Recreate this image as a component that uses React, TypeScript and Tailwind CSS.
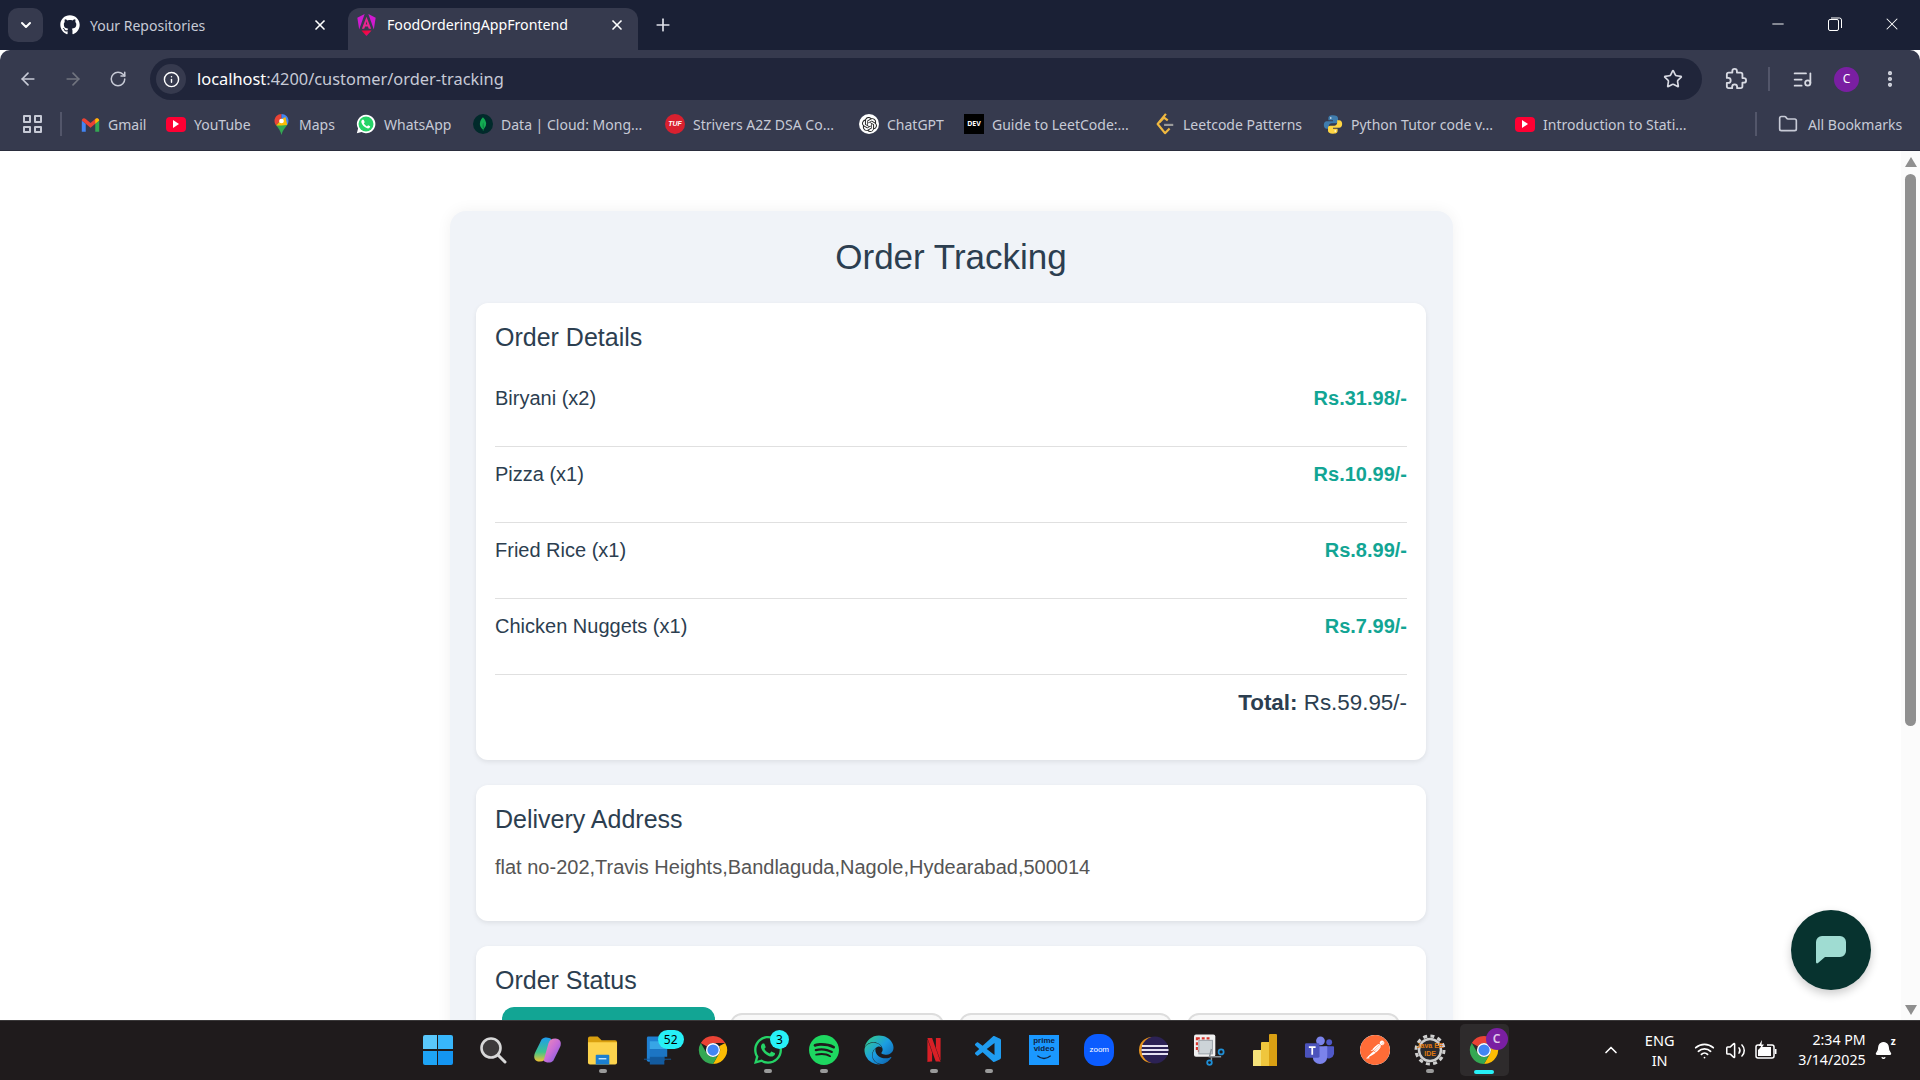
import React from 'react';
import {
  ArrowLeft, ArrowRight, RotateCw, Info, Star, ListMusic, EllipsisVertical,
  Folder, X, Plus, ChevronDown, ChevronUp, Minus, Wifi, Volume2, Bell,
} from 'lucide-react';
import { FaGithub, FaEdge, FaWhatsapp } from 'react-icons/fa';
import { SiSpotify, SiNetflix, SiPostman, SiMongodb, SiOpenai } from 'react-icons/si';
import { VscVscode } from 'react-icons/vsc';

const uiFont = { fontFamily: '"Noto Sans", sans-serif' };

function Gmail() {
  return (
    <svg viewBox="0 0 24 18" className="h-[15px] w-[19px]">
      <path d="M1 18V4l5 4v10z" fill="#4285f4" />
      <path d="M23 18V4l-5 4v10z" fill="#34a853" />
      <path d="M1 4c0-3 3-4 5-2l6 5 6-5c2-2 5-1 5 2l-5 4-6 5-6-5z" fill="#ea4335" />
      <path d="M18 2c2-2 5-1 5 2l-5 4z" fill="#fbbc04" />
    </svg>
  );
}

function Youtube() {
  return (
    <div className="flex h-[15px] w-[20px] items-center justify-center rounded-[4px] bg-[#ff0033]">
      <div className="h-0 w-0 border-y-[4px] border-l-[6px] border-y-transparent border-l-white" />
    </div>
  );
}

function Maps() {
  return (
    <svg viewBox="0 0 16 24" className="h-[21px] w-[15px]">
      <path d="M8 0C3.5 0 0 3.5 0 8c0 2 .8 3.600 2 5l6-7z" fill="#ea4335" />
      <path d="M8 0c4.500 0 8 3.500 8 8 0 1.500-.5 3-1.500 4.500L8 6z" fill="#4285f4" />
      <path d="M2 13c2.500 3 5 6 6 11 1-5 4-8 6.500-11.500L8 6z" fill="#34a853" />
      <path d="M2 13l6-7 4.500-2.500L14.500 12.500 8 13z" fill="#fbbc04" />
      <circle cx="8" cy="8" r="2.700" fill="#fff" />
    </svg>
  );
}

function WhatsappFilled() {
  return (
    <svg viewBox="0 0 24 24" className="h-[20px] w-[20px]">
      <path d="M12 1a11 11 0 0 0-9.500 16.500L1 23l5.700-1.500A11 11 0 1 0 12 1z" fill="#fff" />
      <circle cx="12" cy="12" r="9" fill="#25d366" />
      <path d="M8.500 6.500c-.5 0-1 .2-1.300.7-.6.8-1 1.700-.7 3 .6 2.500 3.800 6 7 7 1.300.4 2.300-.2 3-1 .4-.5.5-1.200.4-1.600l-2.400-1.200-1.300 1.500c-1.700-.7-3-2-3.800-3.700l1.100-1.300-1-2.400z" fill="#fff" />
    </svg>
  );
}

function Python() {
  return (
    <svg viewBox="0 0 24 24" className="h-[21px] w-[20px]">
      <path d="M12 1C7 1 6.500 3 6.500 4.500V7H12v1H4.500C2.500 8 1 9.800 1 12.500S2.500 17 4.500 17H7v-3c0-2 1.500-3.500 3.500-3.500h5c1.500 0 2.500-1 2.500-2.500V4.500C18 2.500 16 1 12 1z" fill="#3f7cad" />
      <circle cx="9.300" cy="4.200" r="1" fill="#fff" />
      <path d="M12 23c5 0 5.500-2 5.500-3.500V17H12v-1h7.500c2 0 3.500-1.800 3.500-4.500S21.500 7 19.500 7H17v3c0 2-1.500 3.500-3.500 3.500h-5C7 13.500 6 14.500 6 16v3.500C6 21.500 8 23 12 23z" fill="#ffd543" />
      <circle cx="14.700" cy="19.800" r="1" fill="#fff" />
    </svg>
  );
}

function Chrome({ size = 'h-[30px] w-[30px]' }: { size?: string }) {
  return (
    <svg viewBox="0 0 32 32" className={size}>
      <path d="M16 1a15 15 0 0 1 13 7.500H16a7.500 7.500 0 0 0-6.500 3.750L3 8.500A15 15 0 0 1 16 1z" fill="#ea4335" />
      <path d="M29 8.500A15 15 0 0 1 16 31l6.500-11.250A7.500 7.500 0 0 0 22.500 12z" fill="#fbbc04" />
      <path d="M3 8.500l6.500 11.250A7.500 7.500 0 0 0 22.500 19.750L16 31A15 15 0 0 1 3 8.500z" fill="#34a853" />
      <circle cx="16" cy="16" r="7.500" fill="#fff" />
      <circle cx="16" cy="16" r="6" fill="#4285f4" />
    </svg>
  );
}

function AngularTab() {
  return (
    <svg viewBox="0 0 20 24" className="h-[22px] w-[19px]">
      <defs>
        <linearGradient id="ng" x1="0" y1="0" x2="1" y2="1">
          <stop offset="0" stopColor="#e40035" />
          <stop offset="0.5" stopColor="#f60a48" />
          <stop offset="1" stopColor="#a905c9" />
        </linearGradient>
      </defs>
      <path d="M8 0L0 4l2 13zM12 0l8 4-2 13z" fill="#d01ad0" />
      <path d="M10 3l-5 13h2.500l1-2.500h3L12.500 16H15zM9.200 11.500L10 8l.8 3.500z" fill="#e8268f" />
      <path d="M4.500 18h11L10 24z" fill="url(#ng)" />
    </svg>
  );
}

function ExtensionIcon() {
  return (
    <svg viewBox="0 0 24 24" className="ml-[23px] h-[22px] w-[22px] text-[#d8dae3]" fill="none" stroke="currentColor" strokeWidth="2" strokeLinejoin="round">
      <path d="M20.500 11H19V7c0-1.100-.9-2-2-2h-4V3.500C13 2.120 11.880 1 10.500 1S8 2.120 8 3.500V5H4c-1.100 0-1.990.9-1.990 2v3.800H3.500c1.490 0 2.700 1.210 2.700 2.700s-1.210 2.700-2.700 2.700H2V20c0 1.100.9 2 2 2h3.800v-1.500c0-1.490 1.210-2.700 2.700-2.700s2.700 1.210 2.700 2.700V22H17c1.100 0 2-.9 2-2v-4h1.500c1.380 0 2.500-1.120 2.500-2.500S21.880 11 20.500 11z" />
    </svg>
  );
}

function Tuf() {
  return (
    <div className="flex h-[20px] w-[20px] items-center justify-center rounded-full bg-[#d9202f] text-[7px] font-bold italic text-white" style={{ fontFamily: '"Liberation Sans", sans-serif' }}>
      TUF
    </div>
  );
}

function Leetcode() {
  return (
    <svg viewBox="0 0 20 24" className="h-[22px] w-[20px]" fill="none" strokeWidth="2.400" strokeLinejoin="round">
      <path d="M11 1L2 12l8 10 5-5" stroke="#f0b840" />
      <path d="M4 10l5-5 4 3" stroke="#f0b840" />
      <path d="M9 13h10" stroke="#9a9a9a" />
    </svg>
  );
}

const bookmarks = [
  { label: 'Gmail', icon: <Gmail />, cls: 'w-[86px]' },
  { label: 'YouTube', icon: <Youtube />, cls: 'w-[105px]' },
  { label: 'Maps', icon: <Maps />, cls: 'w-[85px]' },
  { label: 'WhatsApp', icon: <WhatsappFilled />, cls: 'w-[117px]' },
  { label: 'Data | Cloud: Mong...', icon: <div className="flex h-[20px] w-[20px] items-center justify-center rounded-full bg-[#012a2b]"><SiMongodb className="h-[14px] w-[14px] text-[#13aa52]" /></div>, cls: 'w-[192px]' },
  { label: 'Strivers A2Z DSA Co...', icon: <Tuf />, cls: 'w-[194px]' },
  { label: 'ChatGPT', icon: <div className="flex h-[20px] w-[20px] items-center justify-center rounded-full bg-white"><SiOpenai className="h-[15px] w-[15px] text-[#222]" /></div>, cls: 'w-[105px]' },
  { label: 'Guide to LeetCode:...', icon: <div className="flex h-[20px] w-[20px] items-center justify-center bg-black text-[7px] font-bold text-white">DEV</div>, cls: 'w-[191px]' },
  { label: 'Leetcode Patterns', icon: <Leetcode />, cls: 'w-[168px]' },
  { label: 'Python Tutor code v...', icon: <Python />, cls: 'w-[192px]' },
  { label: 'Introduction to Stati...', icon: <Youtube />, cls: 'w-[200px]' },
];

function WindowsLogo() {
  return (
    <div className="grid h-[30px] w-[30px] grid-cols-2 gap-[1.500px]">
      <div className="rounded-tl-[2px] bg-[#5ac8fb]" />
      <div className="rounded-tr-[2px] bg-[#38b7fb]" />
      <div className="rounded-bl-[2px] bg-[#1ea4f5]" />
      <div className="rounded-br-[2px] bg-[#1495f1]" />
    </div>
  );
}

function Search() {
  return (
    <svg viewBox="0 0 28 28" className="h-[28px] w-[28px]">
      <circle cx="12" cy="12" r="9.500" fill="#3d3a3b" stroke="#d8d8d8" strokeWidth="2.600" />
      <path d="M19 19l7 7" stroke="#d8d8d8" strokeWidth="3" strokeLinecap="round" />
    </svg>
  );
}

function Copilot() {
  return (
    <svg viewBox="0 0 30 30" className="h-[30px] w-[29px]">
      <defs>
        <linearGradient id="cpa" x1="0" y1="0" x2="0" y2="1">
          <stop offset="0" stopColor="#1f9cf0" />
          <stop offset="0.6" stopColor="#3ec48d" />
          <stop offset="1" stopColor="#f2c230" />
        </linearGradient>
        <linearGradient id="cpb" x1="0" y1="0" x2="1" y2="1">
          <stop offset="0" stopColor="#f48fb1" />
          <stop offset="0.5" stopColor="#c86dd7" />
          <stop offset="1" stopColor="#6a5ae0" />
        </linearGradient>
      </defs>
      <path d="M9 4c3-3 8-2 10 0l-5 18c-1 3-3 5-7 5-5 0-7-4-5-9z" fill="url(#cpa)" />
      <path d="M21 26c-3 3-8 2-10 0l5-18c1-3 3-5 7-5 5 0 7 4 5 9z" fill="url(#cpb)" />
    </svg>
  );
}

function Explorer() {
  return (
    <svg viewBox="0 0 32 30" className="h-[30px] w-[31px]">
      <path d="M1 3a2 2 0 0 1 2-2h8l4 4h14a2 2 0 0 1 2 2v4H1z" fill="#d9a00f" />
      <path d="M1 7h30v21a2 2 0 0 1-2 2H3a2 2 0 0 1-2-2z" fill="#fcd34d" />
      <path d="M9 21a1 1 0 0 1 1-1h12a1 1 0 0 1 1 1v9H9z" fill="#1b7fd0" />
      <path d="M12 24h8" stroke="#bfe3ff" strokeWidth="1.500" />
    </svg>
  );
}

function Outlook() {
  return (
    <svg viewBox="0 0 32 30" className="h-[30px] w-[31px]">
      <rect x="4" y="1" width="18" height="26" rx="1.500" fill="#1f7fd1" />
      <rect x="7" y="6" width="18" height="8" fill="#37a5e6" />
      <rect x="7" y="14" width="18" height="8" fill="#1c75c4" />
      <rect x="7" y="22" width="15" height="8" fill="#135b9f" />
      <path d="M1 24h28v1H1z" fill="#155a9c" />
    </svg>
  );
}

function PrimeVideo() {
  return (
    <div className="flex h-[30px] w-[30px] flex-col items-center bg-[#1a98ff] pt-[2px] text-[#10233f]" style={{ fontFamily: '"Liberation Sans", sans-serif' }}>
      <span className="text-[8px] leading-[8px] font-bold">prime</span>
      <span className="text-[8px] leading-[8px] font-bold">video</span>
      <svg viewBox="0 0 20 6" className="mt-[2px] h-[5px] w-[20px]" fill="none">
        <path d="M2 1c5 4 11 4 16 0" stroke="#10233f" strokeWidth="1.500" />
      </svg>
    </div>
  );
}

function Zoom() {
  return (
    <div className="flex h-[32px] w-[30px] items-center justify-center rounded-[13px] bg-[#0b5cff] text-[8px] text-white" style={{ fontFamily: '"Liberation Sans", sans-serif' }}>
      zoom
    </div>
  );
}

function Eclipse() {
  return (
    <svg viewBox="0 0 30 30" className="h-[30px] w-[30px]">
      <circle cx="13" cy="15" r="13" fill="#e8951f" />
      <circle cx="16" cy="15" r="13.500" fill="#2c2255" />
      <path d="M3 11h26M2.500 15h27M3 19h26" stroke="#e5e2f2" strokeWidth="2" />
    </svg>
  );
}

function Snipping() {
  return (
    <svg viewBox="0 0 32 32" className="h-[32px] w-[31px]">
      <rect x="0" y="0" width="22" height="23" rx="2" fill="#f0f0f0" />
      <rect x="3" y="4" width="13" height="13" fill="none" stroke="#d8342c" strokeWidth="2.200" strokeDasharray="3 2" />
      <rect x="5" y="6" width="14" height="14" fill="#cdd4d8" stroke="#9aa2a8" strokeWidth="1" />
      <path d="M18 15l-2 8 12 0M18 24v3" stroke="#8a9298" strokeWidth="1.500" fill="none" />
      <circle cx="28" cy="18" r="2.600" fill="none" stroke="#1f8fd6" strokeWidth="1.800" />
      <circle cx="16" cy="29" r="2.400" fill="none" stroke="#1f8fd6" strokeWidth="1.800" />
    </svg>
  );
}

function PowerBi() {
  return (
    <div className="flex h-[32px] w-[24px] items-end">
      <div className="h-[16px] w-[8px] rounded-tl-[1px] bg-[#f5e27a]" />
      <div className="h-[24px] w-[8px] rounded-tl-[1px] bg-[#efc63d]" />
      <div className="h-[32px] w-[8px] rounded-t-[1px] bg-[#d9a013]" />
    </div>
  );
}

function Teams() {
  return (
    <svg viewBox="0 0 32 30" className="h-[30px] w-[31px]">
      <circle cx="17" cy="5.500" r="4.500" fill="#7b83eb" />
      <circle cx="26" cy="7" r="3" fill="#5059c9" />
      <path d="M21 11h9a1 1 0 0 1 1 1v7a6 6 0 0 1-10 3z" fill="#5059c9" />
      <path d="M9 11h15v11a7.500 7.500 0 0 1-15 0z" fill="#7b83eb" />
      <rect x="1" y="8" width="15" height="15" rx="1.500" fill="#4b53bc" />
      <path d="M5 12h7M8.500 12v8" stroke="#fff" strokeWidth="1.800" />
    </svg>
  );
}

function JavaGear() {
  return (
    <div className="relative flex h-[32px] w-[32px] items-center justify-center">
      <svg viewBox="0 0 32 32" className="h-[32px] w-[32px]">
        <circle cx="16" cy="16" r="11" fill="#2a2a2e" stroke="#cfcfcf" strokeWidth="2.500" />
        <circle cx="16" cy="16" r="14" fill="none" stroke="#cfcfcf" strokeWidth="3" strokeDasharray="4 3.330" />
      </svg>
      <div className="absolute inset-0 flex flex-col items-center justify-center text-[7px] leading-[8px] font-bold text-[#e07a10]" style={{ fontFamily: '"Liberation Sans", sans-serif' }}>
        <span>Java EE</span>
        <span>IDE</span>
      </div>
    </div>
  );
}

function BatteryIcon() {
  return (
    <svg viewBox="0 0 22 20" className="ml-[9px] h-[20px] w-[22px]">
      <path d="M5 5H3a2 2 0 0 0-2 2v9a2 2 0 0 0 2 2h14a2 2 0 0 0 2-2V7a2 2 0 0 0-2-2h-5" fill="none" stroke="#fff" strokeWidth="1.500" />
      <path d="M6 7h10v9H3V10z" fill="#fff" />
      <path d="M20 9h1.500v5H20z" fill="#fff" />
      <path d="M7 0L3.500 6H6l-1 4 4-5.500H6.500z" fill="#fff" />
    </svg>
  );
}

function Badge({ text, cls }: { text: string; cls: string }) {
  return (
    <span className={`absolute flex items-center justify-center rounded-full bg-[#27f0f7] text-black ${cls}`} style={uiFont}>
      {text}
    </span>
  );
}

const taskbarApps = [
  { node: <WindowsLogo /> },
  { node: <Search /> },
  { node: <Copilot /> },
  { node: <Explorer />, dot: true },
  { node: <Outlook />, badge: <Badge text="52" cls="right-[2px] top-[9px] h-[19px] w-[26px] text-[12px]" /> },
  { node: <Chrome size="h-[32px] w-[30px]" /> },
  {
    node: <FaWhatsapp className="h-[32px] w-[32px] text-[#25d366]" />,
    dot: true,
    badge: <Badge text="3" cls="right-[7px] top-[9px] h-[19px] w-[19px] text-[12px]" />,
  },
  { node: <SiSpotify className="h-[30px] w-[30px] text-[#1ed760]" />, dot: true },
  { node: <FaEdge className="h-[32px] w-[30px]" fill="url(#edge)" /> },
  { node: <SiNetflix className="h-[32px] w-[24px] text-[#d81f26]" />, dot: true },
  { node: <VscVscode className="h-[32px] w-[32px] text-[#1f9cf0]" />, dot: true },
  { node: <PrimeVideo /> },
  { node: <Zoom /> },
  { node: <Eclipse /> },
  { node: <Snipping /> },
  { node: <PowerBi /> },
  { node: <Teams /> },
  { node: <SiPostman className="h-[30px] w-[30px] rounded-full bg-white text-[#ff6c37]" /> },
  { node: <JavaGear />, dot: true },
];

const items = [
  { name: 'Biryani (x2)', price: 'Rs.31.98/-' },
  { name: 'Pizza (x1)', price: 'Rs.10.99/-' },
  { name: 'Fried Rice (x1)', price: 'Rs.8.99/-' },
  { name: 'Chicken Nuggets (x1)', price: 'Rs.7.99/-' },
];

function BrowserChrome() {
  return (
    <div className="shrink-0 text-[#c7cad6]" style={uiFont}>
      {/* tab strip */}
      <div className="flex h-[50px] items-end bg-[#1a2035]">
        <div className="mb-[8px] ml-[8px] flex h-[34px] w-[35px] items-center justify-center rounded-[10px] bg-[#363a4e]">
          <ChevronDown className="h-[16px] w-[16px] text-white" strokeWidth={3} />
        </div>
        <div className="flex h-[42px] w-[305px] items-center pb-[8px] pl-[17px] pr-[20px]">
          <FaGithub className="h-[20px] w-[20px] text-white" />
          <span className="ml-[10px] flex-1 text-[14px] text-[#c7cad6]">Your Repositories</span>
          <X className="h-[16px] w-[16px] text-white" strokeWidth={2.5} />
        </div>
        <div className="flex h-[42px] w-[290px] items-center rounded-t-[12px] bg-[#363a4e] pb-[8px] pl-[9px] pr-[13px]">
          <AngularTab />
          <span className="ml-[11px] flex-1 text-[14.2px] text-white">FoodOrderingAppFrontend</span>
          <X className="h-[16px] w-[16px] text-white" strokeWidth={2.5} />
        </div>
        <div className="flex h-[42px] w-[50px] items-center justify-center pb-[8px]">
          <Plus className="h-[20px] w-[20px] text-[#dfe1ea]" />
        </div>
        <div className="ml-auto flex h-[50px] items-center pb-[2px] text-white">
          <div className="flex w-[57px] justify-center"><Minus className="h-[18px] w-[18px]" strokeWidth={1.25} /></div>
          <div className="flex w-[57px] justify-center">
            <svg viewBox="0 0 14 14" className="h-[14px] w-[14px]" fill="none" stroke="currentColor">
              <rect x="0.500" y="2.500" width="10" height="11" rx="1.500" />
              <path d="M3 1h8.500a2 2 0 0 1 2 2v8" />
            </svg>
          </div>
          <div className="flex w-[57px] justify-center"><X className="h-[20px] w-[20px]" strokeWidth={1.25} /></div>
        </div>
      </div>
      {/* toolbar */}
      <div className="flex h-[50px] items-center rounded-t-[10px] bg-[#363a4e] pl-[18px] pt-[8px]">
        <ArrowLeft className="h-[20px] w-[20px] text-[#c7cad6]" strokeWidth={2} />
        <ArrowRight className="ml-[25px] h-[20px] w-[20px] text-[#71747f]" strokeWidth={2} />
        <RotateCw className="ml-[26px] h-[18px] w-[18px] text-[#c7cad6]" strokeWidth={2} />
        <div className="ml-[23px] flex h-[42px] w-[1552px] items-center rounded-full bg-[#20253a] pl-[6px] pr-[19px]">
          <div className="flex h-[30px] w-[30px] items-center justify-center rounded-full bg-[#363a4e]">
            <Info className="h-[17px] w-[17px] text-white" strokeWidth={2} />
          </div>
          <span className="ml-[11px] flex-1 text-[16.4px] text-[#c7cad6]">
            <span className="text-white">localhost</span>:4200/customer/order-tracking
          </span>
          <Star className="h-[20px] w-[20px] text-[#d8dae3]" strokeWidth={2} />
        </div>
        <ExtensionIcon />
        <div className="ml-[21px] h-[24px] w-[2px] bg-[#53566a]" />
        <ListMusic className="ml-[22px] h-[21px] w-[21px] text-[#d8dae3]" strokeWidth={2} />
        <div className="ml-[21px] flex h-[25px] w-[25px] items-center justify-center rounded-full bg-[#7a1fa2] text-[12px] text-white">C</div>
        <EllipsisVertical className="ml-[21px] h-[20px] w-[20px] text-[#d8dae3]" strokeWidth={3} />
      </div>
      {/* bookmarks */}
      <div className="flex h-[51px] items-center border-b border-[#2a2d3d] bg-[#363a4e] pb-[2px] pl-[23px] text-[14px]">
        <div className="grid h-[18px] w-[19px] grid-cols-2 gap-[3px]">
          <div className="rounded-[1px] border-2 border-[#c7cad6]" />
          <div className="rounded-[1px] border-2 border-[#c7cad6]" />
          <div className="rounded-[1px] border-2 border-[#c7cad6]" />
          <div className="rounded-[1px] border-2 border-[#c7cad6]" />
        </div>
        <div className="ml-[18px] mr-[18px] h-[24px] w-[2px] bg-[#53566a]" />
        {bookmarks.map((b) => (
          <div key={b.label} className={`flex shrink-0 items-center gap-[8px] whitespace-nowrap ${b.cls}`}>
            <span className="flex w-[20px] shrink-0 justify-center">{b.icon}</span>
            <span>{b.label}</span>
          </div>
        ))}
        <div className="ml-[40px] h-[24px] w-[2px] bg-[#53566a]" />
        <Folder className="ml-[21px] h-[20px] w-[20px] text-[#c7cad6]" strokeWidth={2} />
        <span className="ml-[10px] whitespace-nowrap">All Bookmarks</span>
      </div>
    </div>
  );
}

function Taskbar() {
  return (
    <div className="flex h-[60px] shrink-0 items-center border-t border-[#3a3839] bg-[#1f1b1c] pb-[1px] pl-[410px] text-white" style={uiFont}>
      <svg className="h-0 w-0">
        <defs>
          <linearGradient id="edge" x1="0" y1="0" x2="1" y2="1">
            <stop offset="0" stopColor="#38d27f" />
            <stop offset="0.5" stopColor="#1b9de2" />
            <stop offset="1" stopColor="#0c59a4" />
          </linearGradient>
        </defs>
      </svg>
      {taskbarApps.map((app, i) => (
        <div key={i} className="relative flex h-full w-[55.15px] shrink-0 items-center justify-center">
          {app.node}
          {app.badge}
          {app.dot && <span className="absolute bottom-[6px] h-[4px] w-[8px] rounded-full bg-[#9a9a9a]" />}
        </div>
      ))}
      <div className="relative ml-[2px] flex h-[52px] w-[49px] shrink-0 items-center justify-center rounded-[5px] bg-[#2e2b2c]">
        <Chrome size="h-[32px] w-[30px]" />
        <span className="absolute right-[1px] top-[4px] flex h-[22px] w-[22px] items-center justify-center rounded-full bg-[#7a1fa2] text-[12px] font-semibold text-[#e0c8ea]">C</span>
        <span className="absolute bottom-[2px] h-[4px] w-[20px] rounded-full bg-[#27f0f7]" />
      </div>
      <ChevronUp className="ml-[92px] h-[20px] w-[20px]" strokeWidth={2} />
      <div className="ml-[14px] flex w-[50px] flex-col items-center text-[14.5px] leading-[20px]">
        <span>ENG</span>
        <span>IN</span>
      </div>
      <Wifi className="ml-[9px] h-[21px] w-[21px]" strokeWidth={2} />
      <Volume2 className="ml-[10px] h-[21px] w-[21px]" strokeWidth={1.75} />
      <BatteryIcon />
      <div className="ml-[9px] flex w-[80px] flex-col items-end text-[14.2px] leading-[20px]">
        <span>2:34 PM</span>
        <span>3/14/2025</span>
      </div>
      <div className="relative ml-[8px]">
        <Bell className="h-[19px] w-[19px] fill-white" strokeWidth={1.5} />
        <span className="absolute -right-[3px] -top-[5px] text-[10px] leading-[10px] font-bold">z</span>
      </div>
    </div>
  );
}

function Scrollbar() {
  return (
    <div className="flex w-[19px] shrink-0 flex-col items-center bg-[#fbfbfb] pt-[6px]">
      <div className="h-0 w-0 border-x-[6.5px] border-b-[10px] border-x-transparent border-b-[#8f8f8f]" />
      <div className="mt-[7px] h-[552px] w-[11px] rounded-full bg-[#8f8f8f]" />
      <div className="mt-auto mb-[5px] h-0 w-0 border-x-[6.5px] border-t-[10px] border-x-transparent border-t-[#8f8f8f]" />
    </div>
  );
}

export default function App() {
  return (
    <div className="flex h-screen flex-col overflow-hidden bg-white">
      <BrowserChrome />
      <div className="relative flex min-h-0 flex-1">
        <div className="min-w-0 flex-1 overflow-hidden pl-[2px] pt-[60px]" style={{ fontFamily: '"Liberation Sans", Arial, sans-serif' }}>
          <div className="mx-auto w-[1003px] rounded-[16px] bg-[#f0f3f8] pl-[26px] pr-[27px] pt-[26px] pb-[20px] text-[#2c3e50] shadow-[0_0_15px_rgba(0,0,0,0.06)]">
            <h1 className="text-center text-[35px] leading-[40px]">Order Tracking</h1>
            <section className="mt-[26px] rounded-[12px] bg-white pl-[19px] pr-[19px] pt-[20px] pb-[44px] shadow-[0_2px_5px_rgba(0,0,0,0.08)]">
              <h2 className="text-[25px] leading-[29px]">Order Details</h2>
              <div className="mt-[19px]">
                {items.map((item) => (
                  <div key={item.name} className="flex h-[76px] items-start justify-between border-b border-[#e0e0e0] pt-[16px] text-[20px] leading-[23px]">
                    <span>{item.name}</span>
                    <span className="font-bold text-[#12a594]">{item.price}</span>
                  </div>
                ))}
              </div>
              <p className="mt-[15px] text-right text-[22.4px] leading-[26px]">
                <strong>Total:</strong> Rs.59.95/-
              </p>
            </section>
            <section className="mt-[25px] rounded-[12px] bg-white pl-[19px] pr-[19px] pt-[20px] pb-[42px] shadow-[0_2px_5px_rgba(0,0,0,0.08)]">
              <h2 className="text-[25px] leading-[29px]">Delivery Address</h2>
              <p className="mt-[22px] text-[20px] leading-[23px] text-[#555555]">flat no-202,Travis Heights,Bandlaguda,Nagole,Hydearabad,500014</p>
            </section>
            <section className="mt-[25px] rounded-[12px] bg-white pt-[20px] pb-[20px] shadow-[0_2px_5px_rgba(0,0,0,0.08)]">
              <h2 className="pl-[19px] text-[25px] leading-[29px]">Order Status</h2>
              <div className="mt-[12px] grid grid-cols-4 gap-[15px] px-[26px]">
                <div className="h-[100px] rounded-[12px] bg-[#12a594]" />
                <div className="mt-[6px] h-[100px] rounded-[12px] border-2 border-[#dddddd] bg-[#f8f8f8]" />
                <div className="mt-[6px] h-[100px] rounded-[12px] border-2 border-[#dddddd] bg-[#f8f8f8]" />
                <div className="mt-[6px] h-[100px] rounded-[12px] border-2 border-[#dddddd] bg-[#f8f8f8]" />
              </div>
            </section>
          </div>
        </div>
        <Scrollbar />
        {/* floating chat button */}
        <button className="absolute bottom-[30px] right-[49px] flex h-[80px] w-[80px] items-center justify-center rounded-full bg-[#07332f] shadow-[0_4px_10px_rgba(0,0,0,0.2)]">
          <svg viewBox="0 0 30 28" className="h-[28px] w-[30px]">
            <path d="M6 0h18a6 6 0 0 1 6 6v9a6 6 0 0 1-6 6H9l-7 6c-1 .8-2 .3-2-1V6a6 6 0 0 1 6-6z" fill="#9fdcd2" />
          </svg>
        </button>
      </div>
      <Taskbar />
    </div>
  );
}
